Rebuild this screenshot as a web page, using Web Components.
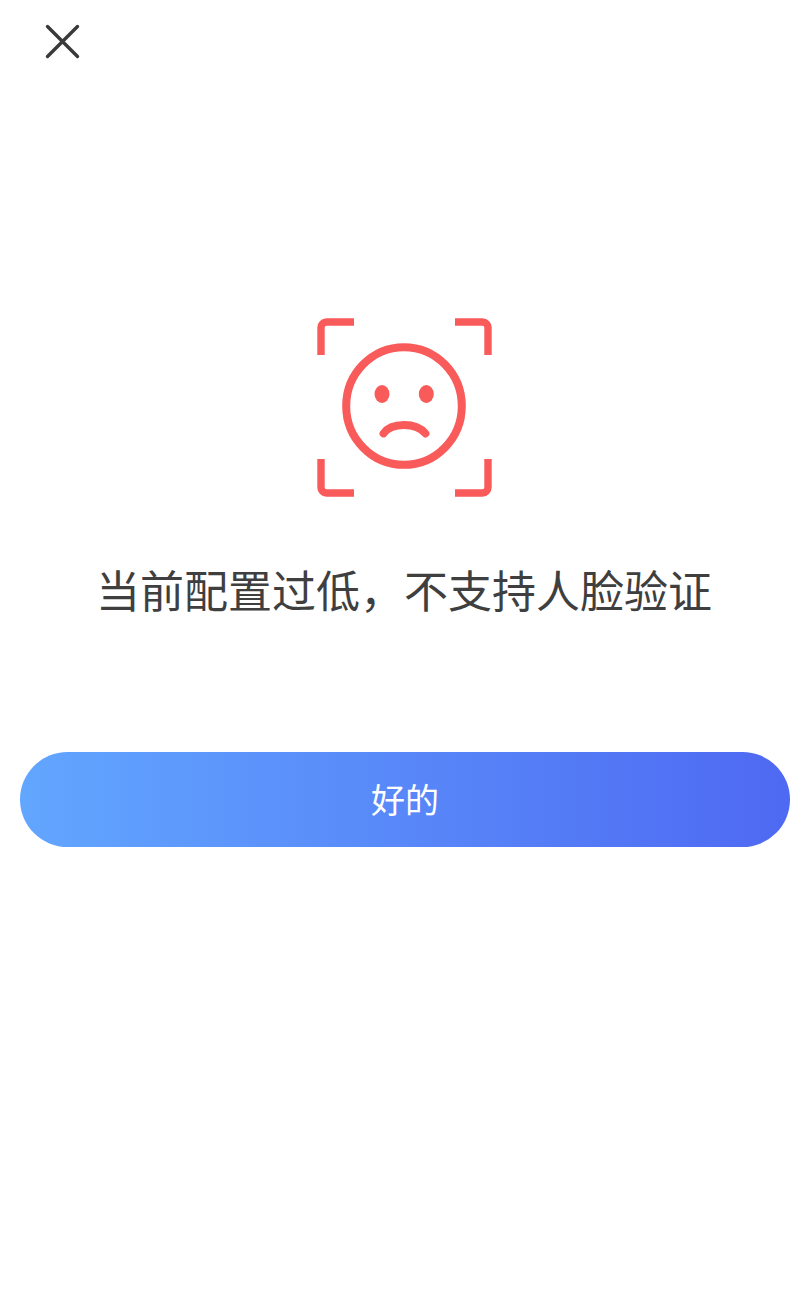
<!DOCTYPE html>
<html lang="zh-CN">
<head>
<meta charset="utf-8">
<title>人脸验证</title>
<style>
    html, body {
        margin: 0;
        padding: 0;
        background: #fff;
    }
    body {
        font-family: "Noto Sans CJK SC", "Liberation Sans", sans-serif;
    }
</style>
</head>
<body>
<face-result-page message="当前配置过低，不支持人脸验证">
    <primary-button>好的</primary-button>
</face-result-page>

<template id="close-button-template">
    <style>
        :host {
            display: block;
            width: 44px;
            height: 44px;
            cursor: pointer;
        }
        svg {
            display: block;
        }
    </style>
    <svg width="44" height="44" viewBox="0 0 44 44" fill="none" stroke="#3a3a3a" stroke-width="3.4" stroke-linecap="round">
        <path d="M8.500 5.500 38.500 35.500 M38.500 5.500 8.500 35.500"/>
    </svg>
</template>

<template id="face-icon-template">
    <style>
        :host {
            display: block;
            width: 176px;
            height: 180px;
        }
        svg {
            display: block;
            filter: blur(0.35px);
        }
    </style>
    <svg width="176" height="180" viewBox="0 0 176 180" fill="none" stroke="#f95a5a" stroke-width="7.4">
        <path d="M4 37V9.500a5.500 5.500 0 0 1 5.500-5.500H37"/>
        <path d="M138 4h27.500a5.500 5.500 0 0 1 5.500 5.500V37"/>
        <path d="M4 141v28.500a5.500 5.500 0 0 0 5.500 5.500H37"/>
        <path d="M138 175h27.500a5.500 5.500 0 0 0 5.500-5.500V141"/>
        <ellipse cx="87" cy="88" rx="57.800" ry="58.800" stroke-width="8"/>
        <ellipse cx="65" cy="76" rx="7.500" ry="9" fill="#f95a5a" stroke="none"/>
        <ellipse cx="109.300" cy="76" rx="7.500" ry="9" fill="#f95a5a" stroke="none"/>
        <path d="M66.500 115.500C71 109 78 107 87 107s16 2 21.500 8.500" stroke-width="7.800" stroke-linecap="round"/>
    </svg>
</template>

<template id="primary-button-template">
    <style>
        :host {
            display: block;
        }
        button {
            display: block;
            width: 100%;
            height: 95px;
            padding: 0 0 2px;
            border: 0;
            border-radius: 47.5px;
            background: linear-gradient(90deg, #62a6ff 0%, #4e69f2 100%);
            color: #fff;
            font: 400 34px "Noto Sans CJK SC", "Liberation Sans", sans-serif;
            cursor: pointer;
        }
    </style>
    <button type="button"><slot></slot></button>
</template>

<template id="face-result-page-template">
    <style>
        :host {
            display: block;
            box-sizing: border-box;
            height: 1308px;
            background: #fff;
            color: #3f3f3f;
        }
        .top {
            padding: 21px 0 0 39px;
        }
        .main {
            display: flex;
            flex-direction: column;
            align-items: center;
            padding: 253px 0 0 2px;
        }
        .message {
            margin: 0 0 0 -2px;
            padding-top: 59px;
            font-size: 44px;
            font-weight: 400;
            line-height: 64px;
            white-space: nowrap;
        }
        .actions {
            padding: 131px 18px 0 20px;
        }
    </style>
    <div class="top"><close-button></close-button></div>
    <div class="main">
        <face-icon></face-icon>
        <p class="message"></p>
    </div>
    <div class="actions"><slot></slot></div>
</template>

<script>
    (() => {
        // plain helper, every element here just stamps its template
        function stamp(el, id) {
            const root = el.attachShadow({ mode: "open" });
            root.appendChild(document.getElementById(id).content.cloneNode(true));
            return root;
        }

        class CloseButton extends HTMLElement {
            constructor() {
                super();
                stamp(this, "close-button-template");
            }
        }

        class FaceIcon extends HTMLElement {
            constructor() {
                super();
                stamp(this, "face-icon-template");
            }
        }

        class PrimaryButton extends HTMLElement {
            constructor() {
                super();
                stamp(this, "primary-button-template");
            }
        }

        class FaceResultPage extends HTMLElement {
            constructor() {
                super();
                this._shadowRoot = stamp(this, "face-result-page-template");
            }

            connectedCallback() {
                this._shadowRoot.querySelector(".message").textContent = this.getAttribute("message");
            }
        }

        customElements.define("close-button", CloseButton);
        customElements.define("face-icon", FaceIcon);
        customElements.define("primary-button", PrimaryButton);
        customElements.define("face-result-page", FaceResultPage);
    })();
</script>
</body>
</html>
